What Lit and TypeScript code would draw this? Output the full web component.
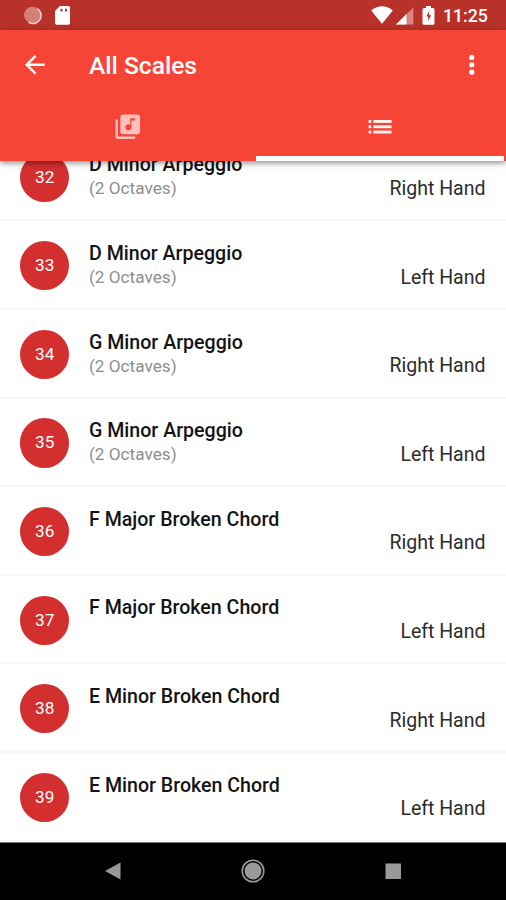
import { LitElement, html, css, svg, nothing } from "lit";
import { customElement } from "lit/decorators.js";

interface Scale {
  no: number;
  name: string;
  detail?: string;
  hand: string;
}

const SCALES: Scale[] = [
  { no: 32, name: "D Minor Arpeggio", detail: "(2 Octaves)", hand: "Right Hand" },
  { no: 33, name: "D Minor Arpeggio", detail: "(2 Octaves)", hand: "Left Hand" },
  { no: 34, name: "G Minor Arpeggio", detail: "(2 Octaves)", hand: "Right Hand" },
  { no: 35, name: "G Minor Arpeggio", detail: "(2 Octaves)", hand: "Left Hand" },
  { no: 36, name: "F Major Broken Chord", hand: "Right Hand" },
  { no: 37, name: "F Major Broken Chord", hand: "Left Hand" },
  { no: 38, name: "E Minor Broken Chord", hand: "Right Hand" },
  { no: 39, name: "E Minor Broken Chord", hand: "Left Hand" },
];

@customElement("scale-row")
export class ScaleRow extends LitElement {
  static properties = { scale: { attribute: false } };
  declare scale: Scale;

  static styles = css`
    :host {
      display: flex;
      box-sizing: border-box;
      height: 88.6px;
      flex: none;
      padding: 0 20.500px 0 20.200px;
      border-bottom: 2px solid #f8f8f8;
    }
    .badge {
      width: 49.2px;
      height: 49.2px;
      margin-top: 19.900px;
      border-radius: 50%;
      background: #d32f2f;
      color: #fff;
      font-size: 17.2px;
      line-height: 49.2px;
      text-align: center;
      flex: none;
    }
    .text {
      margin-left: 19.600px;
      padding-top: 20.6px;
      flex: 1;
      white-space: nowrap;
    }
    .name {
      font-size: 19.600px;
      font-weight: 500;
      line-height: 24px;
      color: #141414;
    }
    .detail {
      font-size: 17.2px;
      line-height: 23.400px;
      color: #8e8e8e;
    }
    .hand {
      padding-top: 44.200px;
      font-size: 19.500px;
      line-height: 24px;
      color: #2b2b2b;
      white-space: nowrap;
    }
  `;

  render() {
    const s = this.scale;
    return html`
      <div class="badge">${s.no}</div>
      <div class="text">
        <div class="name">${s.name}</div>
        ${s.detail ? html`<div class="detail">${s.detail}</div>` : nothing}
      </div>
      <div class="hand">${s.hand}</div>
    `;
  }
}

@customElement("app-root")
export class AppRoot extends LitElement {
  static styles = css`
    :host {
      display: flex;
      flex-direction: column;
      width: 506px;
      height: 900px;
      overflow: hidden;
      background: #fff;
      font-family: Roboto, sans-serif;
    }
    svg {
      display: block;
      flex: none;
    }
    .status {
      display: flex;
      align-items: center;
      height: 30px;
      flex: none;
      background: #b83229;
      color: #fff;
    }
    .clock {
      width: 63px;
      font-size: 17.7px;
      font-weight: 500;
      line-height: 30px;
      padding-top: 2px;
      box-sizing: border-box;
    }
    .header {
      background: #f64436;
      color: #fff;
      height: 130.500px;
      flex: none;
      display: flex;
      flex-direction: column;
      box-shadow: 0 2px 6px rgba(0, 0, 0, 0.45);
      position: relative;
      z-index: 1;
    }
    .bar {
      height: 70px;
      display: flex;
      align-items: center;
      padding: 0 19.200px 0 20.3px;
    }
    .title {
      margin-left: 39.2px;
      padding-top: 1.500px;
      flex: 1;
      font-size: 24.6px;
      font-weight: 500;
      line-height: 30px;
    }
    .tabs {
      display: grid;
      grid-template-columns: 256px 248px;
      height: 60.500px;
    }
    .tab {
      display: flex;
      justify-content: center;
      box-sizing: border-box;
      padding-top: 12px;
    }
    .muted {
      color: #ffc0bb;
      padding-right: 1.500px;
    }
    .active {
      border-bottom: 5px solid #fff;
    }
    .list {
      height: 681px;
      flex: none;
      overflow: hidden;
      display: flex;
      flex-direction: column;
      justify-content: flex-end;
    }
    .nav {
      flex: 1;
      background: #000;
      border-top: 1px solid #777;
      display: flex;
      align-items: center;
      justify-content: center;
      gap: 110px;
    }
  `;

  render() {
    return html`
      <div class="status">
        <svg width="443" height="30" viewBox="0 0 443 30">
          <circle cx="32.3" cy="15" r="8.3" fill="#d47f79" />
          <path d="M37.5 8.6A8.1 8.1 0 0 1 28.5 22.2" fill="none" stroke="#f3cfcb" stroke-width="1.6" />
          <path fill="#fff" fill-rule="evenodd" d="M60 6h8.3q1.7 0 1.7 1.7v15.4q0 1.7-1.7 1.7H56.7Q55 24.800 55 23.100V11zM60.500 8.800v2.800h2V8.800zM65 8.800v2.800h2V8.800z" />
          <path fill="#fff" d="M371.200 10.500Q382 2.200 392.800 10.500L382 23.800z" />
          <path fill="#d98680" d="M396 24.600 413.300 7.400V24.600z" />
          <path fill="#fff" d="M396 24.600 406.500 14.100V24.600z" />
          <path fill="#fff" fill-rule="evenodd" d="M426 6h5v2h2q1.500 0 1.500 1.500v13.800q0 1.500-1.500 1.500h-9q-1.500 0-1.500-1.500V9.500Q422.500 8 424 8h2zM429.200 11 426.200 16.600h2v4.400l3-5.800h-2z" />
        </svg>
        <div class="clock">11:25</div>
      </div>
      <div class="header">
        <div class="bar">
          <svg width="29.5" height="29.5" viewBox="0 0 24 24" fill="#fff">
            <path d="M20 11H7.830l5.590-5.590L12 4l-8 8 8 8 1.410-1.410L7.830 13H20v-2z" />
          </svg>
          <div class="title">All Scales</div>
          <svg width="29.5" height="29.5" viewBox="0 0 24 24" fill="#fff">
            <circle cx="12" cy="6" r="2.100" /><circle cx="12" cy="12" r="2.100" /><circle cx="12" cy="18" r="2.100" />
          </svg>
        </div>
        <div class="tabs">
          <div class="tab muted">
            <svg width="29.5" height="29.5" viewBox="0 0 24 24" fill="currentColor">
              <path d="M20 2H8c-1.100 0-2 .9-2 2v12c0 1.100.9 2 2 2h12c1.100 0 2-.9 2-2V4c0-1.100-.9-2-2-2zm-2 5h-3v5.500c0 1.380-1.120 2.500-2.500 2.500S10 13.880 10 12.500s1.120-2.500 2.500-2.500c.57 0 1.080.19 1.500.51V5h4v2zM4 6H2v14c0 1.100.9 2 2 2h14v-2H4V6z" />
            </svg>
          </div>
          <div class="tab active">
            <svg width="30" height="30" viewBox="0 0 30 30" fill="#fff2f0">
              ${[8, 13.3, 18.6].map(
                (y) => svg`<rect x="3.600" y=${y} width="2.700" height="2.900"/><rect x="8.300" y=${y} width="18.200" height="2.900"/>`
              )}
            </svg>
          </div>
        </div>
      </div>
      <div class="list">
        ${SCALES.map((s) => html`<scale-row .scale=${s}></scale-row>`)}
      </div>
      <div class="nav">
        <svg width="30" height="30" viewBox="0 0 30 30" fill="#999"><path d="M7 15 22.500 6.500v17z" /></svg>
        <svg width="30" height="30" viewBox="0 0 30 30">
          <circle cx="15" cy="15" r="10.800" fill="none" stroke="#999" stroke-width="1.600" />
          <circle cx="15" cy="15" r="8.500" fill="#999" />
        </svg>
        <svg width="30" height="30" viewBox="0 0 30 30" fill="#999"><rect x="7.500" y="7.500" width="15.500" height="15.500" /></svg>
      </div>
    `;
  }
}
